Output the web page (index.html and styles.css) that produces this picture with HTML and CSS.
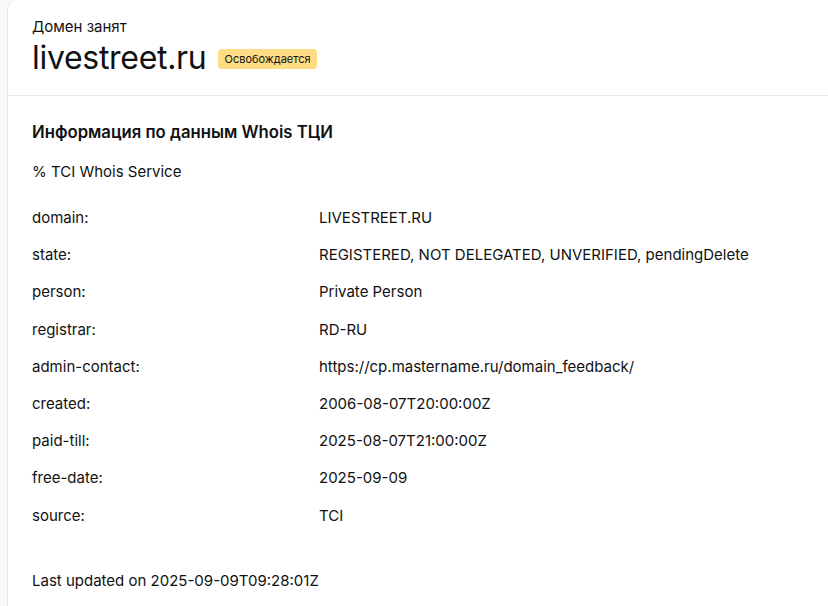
FILE: index.html
```html
<!DOCTYPE html>
<html lang="ru">
<head>
  <meta charset="UTF-8" />
  <meta name="viewport" content="width=device-width, initial-scale=1.0" />
  <title>livestreet.ru — Whois</title>
  <link rel="stylesheet" href="styles.css">
</head>
<body>
  <div class="page">
    <div class="card">
      <!-- Domain header -->
      <div class="domain-head">
        <div class="domain-status">Домен занят</div>
        <div class="domain-title">
          <h1>livestreet.ru</h1>
          <span class="badge">Освобождается</span>
        </div>
      </div>
      <!-- Whois info -->
      <div class="whois">
        <h2>Информация по данным Whois ТЦИ</h2>
        <p class="whois-service">% TCI Whois Service</p>
        <div class="whois-table">
          <div class="key">domain:</div><div class="val">LIVESTREET.RU</div>
          <div class="key">state:</div><div class="val">REGISTERED, NOT DELEGATED, UNVERIFIED, pendingDelete</div>
          <div class="key">person:</div><div class="val">Private Person</div>
          <div class="key">registrar:</div><div class="val">RD-RU</div>
          <div class="key">admin-contact:</div><div class="val">https://cp.mastername.ru/domain_feedback/</div>
          <div class="key">created:</div><div class="val">2006-08-07T20:00:00Z</div>
          <div class="key">paid-till:</div><div class="val">2025-08-07T21:00:00Z</div>
          <div class="key">free-date:</div><div class="val">2025-09-09</div>
          <div class="key">source:</div><div class="val">TCI</div>
        </div>
        <p class="updated">Last updated on 2025-09-09T09:28:01Z</p>
      </div>
    </div>
  </div>
</body>
</html>
```

FILE: styles.css
```css
/* Global Styles */
html, body {
  margin: 0;
  padding: 0;
  font-family: 'Inter', 'Noto Sans', sans-serif;
  color: #111;
  background: #f7f9f9;
}
.page {
  padding-left: 7px;
  min-height: 100vh;
  display: flex;
}
.card {
  flex-grow: 1;
  background: #fff;
  border-left: 1px solid #e4e8e9;
  border-top-left-radius: 10px;
  min-height: 100vh;
}
/* Domain header */
.domain-head {
  padding: 17px 24px 17px;
  border-bottom: 1px solid #e8ebec;
}
.domain-status {
  font-size: 15px;
  line-height: 20px;
}
.domain-title {
  display: flex;
  align-items: center;
  gap: 12px;
  margin-top: 1px;
}
.domain-title h1 {
  margin: 0;
  font-size: 32px;
  font-weight: 400;
  line-height: 40px;
  letter-spacing: -0.3px;
}
.badge {
  background: #fddc84;
  border-radius: 4px;
  font-size: 11px;
  line-height: 20px;
  padding: 0 6px;
  margin-top: 2px;
}
/* Whois info */
.whois {
  padding: 19px 24px 0;
}
.whois h2 {
  margin: 0;
  font-size: 16.7px;
  font-weight: 600;
  line-height: 34px;
}
.whois-service {
  margin: 13px 0 0;
  font-size: 15px;
  line-height: 20px;
}
.whois-table {
  display: grid;
  grid-template-columns: 287px 1fr;
  row-gap: 17.2px;
  margin-top: 26px;
  font-size: 15px;
  line-height: 20px;
}
.updated {
  margin: 45px 0 0;
  font-size: 15px;
  line-height: 20px;
}
```
